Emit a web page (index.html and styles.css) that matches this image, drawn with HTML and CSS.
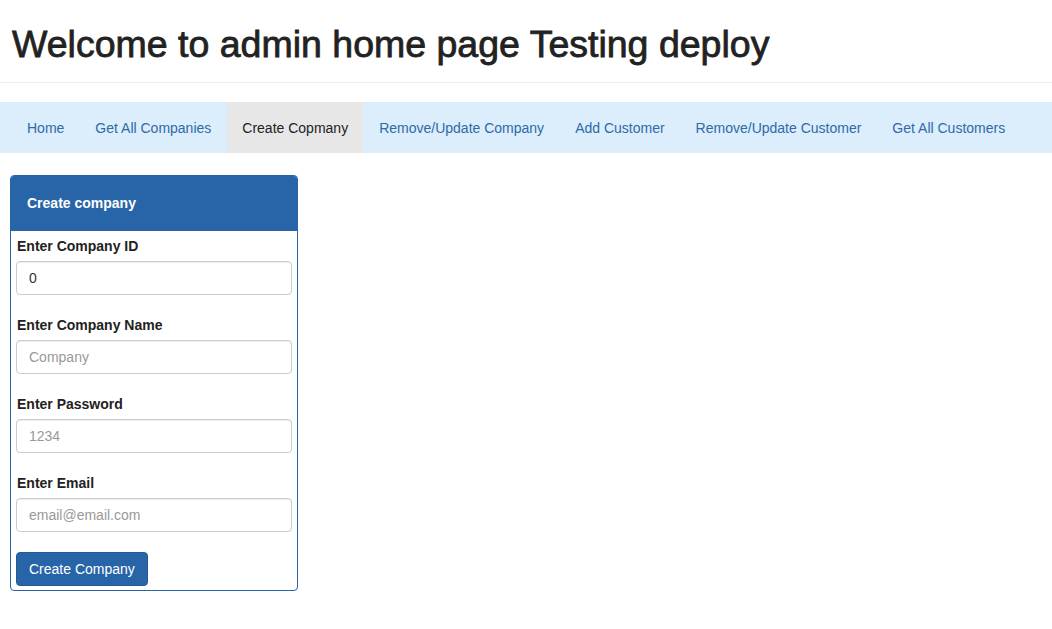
FILE: index.html
```html
<!DOCTYPE html>
<html>
<head>
<meta charset="utf-8">
<link rel="stylesheet" href="styles.css">
</head>
<body>
<div class="page-header">
  <h1>Welcome to admin home page Testing deploy</h1>
</div>
<nav class="navbar">
  <ul class="nav">
    <li><a href="#">Home</a></li>
    <li><a href="#">Get All Companies</a></li>
    <li class="active"><a href="#">Create Copmany</a></li>
    <li><a href="#">Remove/Update Company</a></li>
    <li><a href="#">Add Customer</a></li>
    <li><a href="#">Remove/Update Customer</a></li>
    <li><a href="#">Get All Customers</a></li>
  </ul>
</nav>
<div class="panel">
  <div class="panel-heading">Create company</div>
  <div class="panel-body">
    <div class="form-group">
      <label>Enter Company ID</label>
      <input class="form-control" type="text" value="0">
    </div>
    <div class="form-group">
      <label>Enter Company Name</label>
      <input class="form-control" type="text" placeholder="Company">
    </div>
    <div class="form-group">
      <label>Enter Password</label>
      <input class="form-control" type="text" placeholder="1234">
    </div>
    <div class="form-group">
      <label>Enter Email</label>
      <input class="form-control" type="text" placeholder="email@email.com">
    </div>
    <button class="btn">Create Company</button>
  </div>
</div>
</body>
</html>
```
FILE: styles.css
```css
* { box-sizing: border-box; }
body {
  margin: 0;
  font-family: "Liberation Sans", Arial, Helvetica, sans-serif;
  font-size: 14px;
  line-height: 20px;
  color: #222;
  background: #fff;
}
.page-header {
  border-bottom: 1px solid #eee;
  padding: 24px 12px 17px;
}
.page-header h1 {
  margin: 0;
  font-size: 37.5px;
  line-height: 41px;
  font-weight: normal;
  color: #222;
  -webkit-text-stroke: 0.8px #222;
}
.navbar {
  margin-top: 19px;
  background: #dcedfb;
  height: 51px;
}
.nav {
  list-style: none;
  margin: 0;
  padding: 0 0 0 12px;
  display: flex;
  gap: 1px;
  height: 51px;
}
.nav li a {
  display: block;
  height: 51px;
  padding: 16px 15px 0;
  line-height: 20px;
  color: #2f6aa8;
  text-decoration: none;
}
.nav li.active a {
  background: #e7e7e7;
  color: #222;
}
.panel {
  margin: 22px 0 0 10px;
  width: 288px;
  border: 1px solid #2865a8;
  border-radius: 4px;
  overflow: hidden;
}
.panel-heading {
  background: #2865a8;
  color: #fff;
  font-weight: bold;
  height: 55px;
  padding: 17px 16px 0;
}
.panel-body {
  padding: 5px 5px 4px;
}
.form-group {
  margin-bottom: 20px;
}
label {
  display: block;
  font-weight: bold;
  margin: 0 0 5px 1px;
}
.form-control {
  display: block;
  width: 100%;
  height: 34px;
  padding: 6px 12px;
  font-family: inherit;
  font-size: 14px;
  color: #333;
  border: 1px solid #ccc;
  border-radius: 4px;
  box-shadow: inset 0 1px 1px rgba(0,0,0,.075);
}
.form-control::placeholder { color: #999; }
.btn {
  height: 34px;
  padding: 0 12px;
  font-family: inherit;
  font-size: 14px;
  color: #fff;
  background: #2865a8;
  border: 1px solid #225a96;
  border-radius: 4px;
}
```
